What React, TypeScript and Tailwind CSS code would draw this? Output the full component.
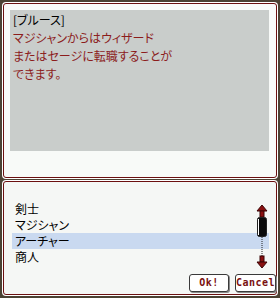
import React from "react";

const jp = "font-['MS_PGothic','Noto_Sans_CJK_JP',sans-serif]";

function ScrollBar() {
  return (
    <svg width="12" height="66" viewBox="0 0 12 66" className="absolute right-[8px] top-[22px]">
      <polygon points="6,1 11,7 1,7" fill="#8a1010" stroke="#3a0505" strokeWidth="1" />
      <rect x="4" y="7" width="4" height="6" fill="#8a1010" stroke="#3a0505" strokeWidth="1" />
      <rect x="1.5" y="13.5" width="9" height="19" rx="2" fill="#0a0a0a" stroke="#222" />
      <line x1="2.5" y1="15" x2="2.5" y2="31" stroke="#fff" strokeWidth="1" />
      <line x1="6" y1="33" x2="6" y2="52" stroke="#222" strokeWidth="1" strokeDasharray="1 1" />
      <rect x="4" y="52" width="4" height="6" fill="#8a1010" stroke="#3a0505" strokeWidth="1" />
      <polygon points="1,58 11,58 6,64" fill="#8a1010" stroke="#3a0505" strokeWidth="1" />
    </svg>
  );
}

function Btn({ label, w }: { label: string; w: string }) {
  return (
    <button
      className={`${w} h-[18px] rounded-[3px] border border-[#3a3a3a] bg-white shadow-[1px_1px_0_#8a8a8a] font-['DejaVu_Sans_Mono',monospace] text-[10px] font-bold leading-none text-[#7a1010] tracking-[0.5px]`}
    >
      {label}
    </button>
  );
}

export default function App() {
  const jobs = ["剣士", "マジシャン", "アーチャー", "商人"];
  const selected = 2;

  return (
    <div className="w-[280px] h-[298px] bg-[#4b4233] pt-[2px] pl-[2px] flex flex-col gap-[1px]">
      <div className="w-[276px] h-[177px] rounded-[4px] bg-white p-[1px]">
        <div className="h-full rounded-[3px] border border-[#6b1010] bg-[#f8faf8] pt-[6px] pl-[6px]">
          <div className={`w-[259px] h-[141px] bg-[#c9cdcb] pl-[3px] pt-[1px] text-[12px] leading-[18px] ${jp} [font-feature-settings:'palt'] text-[#8c1c1c]`}>
            <p className="text-black">[ブルース]</p>
            <p>マジシャンからはウィザード</p>
            <p>またはセージに転職することが</p>
            <p>できます。</p>
          </div>
        </div>
      </div>

      <div className="w-[276px] h-[116px] rounded-[4px] bg-white p-[1px]">
        <div className="relative h-full rounded-[3px] border border-[#6b1010] bg-[#f5f7f5] pt-[19px] pl-[8px]">
          <div className={`text-[12px] leading-[16px] ${jp} [font-feature-settings:'palt'] text-black`}>
            {jobs.map((j, i) => (
              <div key={j} className={`w-[257px] pl-[3px] h-[16px] ${i === selected ? "bg-[#c9d9f0]" : ""}`}>
                {j}
              </div>
            ))}
          </div>
          <ScrollBar />
          <div className="mt-[9px] flex justify-end gap-[6px] pr-[0px]">
            <Btn label="Ok!" w="w-[40px]" />
            <Btn label="Cancel" w="w-[41px]" />
          </div>
        </div>
      </div>
    </div>
  );
}
